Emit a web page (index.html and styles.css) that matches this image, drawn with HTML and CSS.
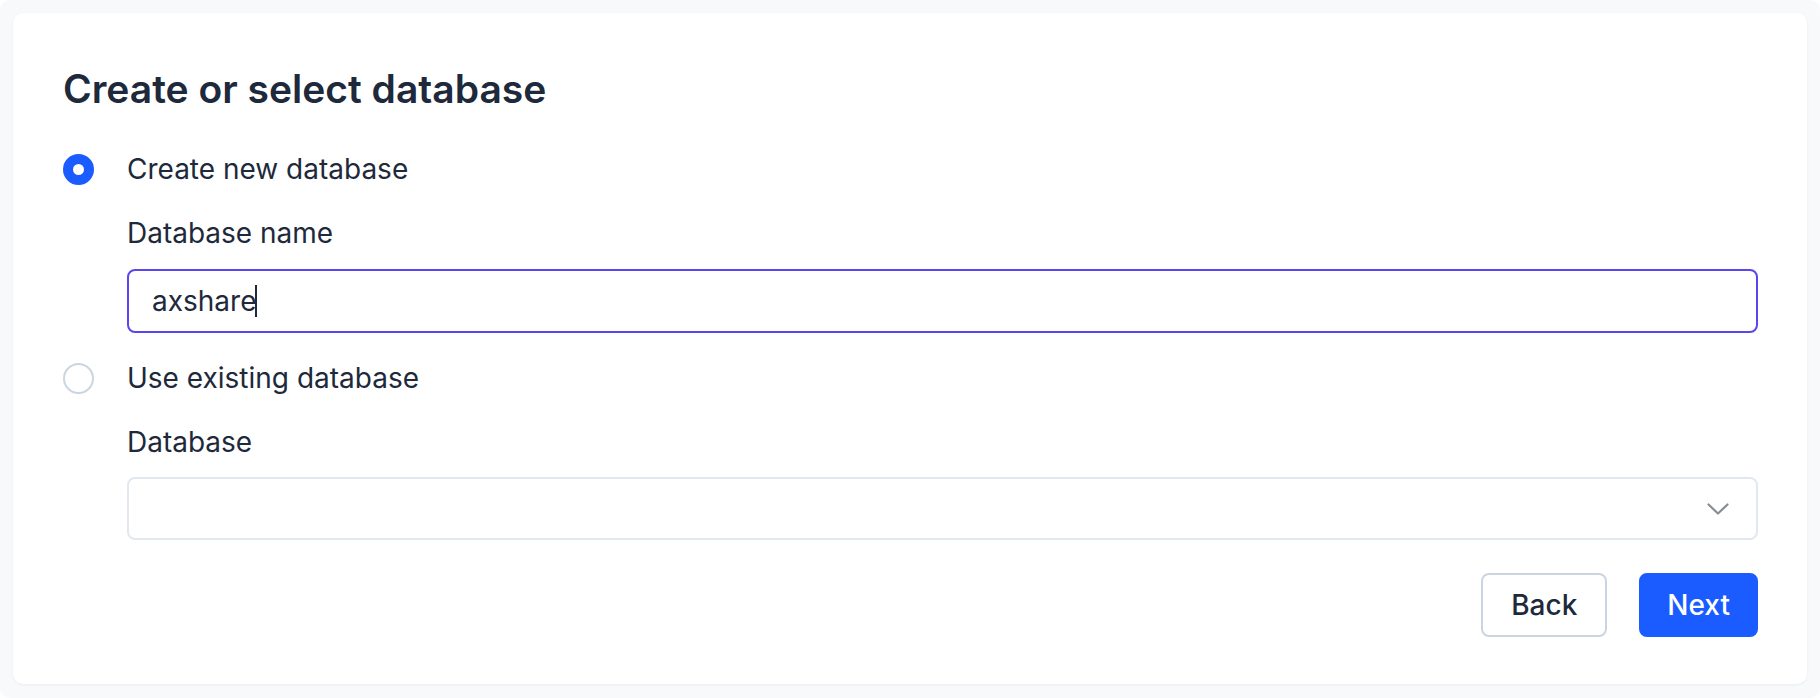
FILE: index.html
```html
<!DOCTYPE html>
<html lang="en">
<head>
    <meta charset="UTF-8">
    <meta name="viewport" content="width=device-width, initial-scale=1.0">
    <title>Create or select database</title>
    <link rel="stylesheet" href="styles.css">
</head>
<body>
    <div class="page">
        <div class="card">
            <h1 class="title">Create or select database</h1>

            <div class="choice">
                <label class="option">
                    <span class="radio radio-checked"></span>
                    Create new database
                </label>
                <div class="field">
                    <div class="field-label">Database name</div>
                    <div class="text-input text-input-focus">axshare<span class="caret"></span></div>
                </div>
            </div>

            <div class="choice">
                <label class="option">
                    <span class="radio"></span>
                    Use existing database
                </label>
                <div class="field field-select">
                    <div class="field-label">Database</div>
                    <div class="select">
                        <svg class="chevron" width="22" height="12" viewBox="0 0 22 12">
                            <path d="M1.5 1.5 L11 10.5 L20.5 1.5" fill="none" stroke="#878d97" stroke-width="2.2" stroke-linecap="round" stroke-linejoin="round"/>
                        </svg>
                    </div>
                </div>
            </div>

            <div class="actions">
                <button type="button" class="btn">Back</button>
                <button type="button" class="btn btn-primary">Next</button>
            </div>
        </div>
    </div>
</body>
</html>
```

FILE: styles.css
```css
* {
    box-sizing: border-box;
}
body {
    margin: 0;
    font-family: Inter, "Noto Sans", sans-serif;
    color: #1e293b;
    background: #ffffff;
}
.page {
    height: 698px;
    padding: 13px;
    background-color: #f8f9fb;
    border-radius: 10px;
}
.card {
    background: #ffffff;
    border-radius: 10px;
    padding: 54px 49px 47px 50px;
    box-shadow: 0 1px 3px rgba(15, 23, 42, 0.06);
}
.title {
    margin: 0 0 37px;
    font-size: 39px;
    line-height: 44px;
    font-weight: 600;
    color: #1e293b;
}
.option {
    display: flex;
    align-items: center;
    height: 42px;
    font-size: 28px;
    line-height: 42px;
}
.radio {
    width: 31px;
    height: 31px;
    margin-right: 33px;
    border: 2px solid #cbd5e1;
    border-radius: 50%;
    flex-shrink: 0;
}
.radio-checked {
    border: 10px solid #1a5cff;
    background: #ffffff;
}
.field {
    padding-left: 64px;
    margin-top: 22px;
}
.field-label {
    font-size: 28px;
    line-height: 42px;
    margin-bottom: 15px;
}
.field-select .field-label {
    margin-bottom: 14px;
}
.text-input {
    height: 64px;
    padding: 0 23px;
    border: 2px solid #5b45f0;
    border-radius: 8px;
    font-size: 28px;
    line-height: 60px;
    display: flex;
    align-items: center;
}
.caret {
    display: inline-block;
    width: 2px;
    height: 32px;
    margin-left: -1px;
    background: #1e293b;
}
.choice + .choice {
    margin-top: 24px;
}
.select {
    height: 63px;
    border: 2px solid #e2e8f0;
    border-radius: 8px;
    display: flex;
    align-items: center;
    justify-content: flex-end;
    padding-right: 27px;
}
.actions {
    display: flex;
    justify-content: flex-end;
    gap: 32px;
    margin-top: 33px;
}
.btn {
    height: 64px;
    padding: 0 28px;
    font-family: Inter, "Noto Sans", sans-serif;
    font-size: 28px;
    font-weight: 500;
    color: #1e293b;
    background: #ffffff;
    border: 2px solid #cbd5e1;
    border-radius: 8px;
    cursor: pointer;
}
.btn-primary {
    background-color: #1a5cff;
    border-color: #1a5cff;
    color: #ffffff;
    padding: 0 26px;
}
```
